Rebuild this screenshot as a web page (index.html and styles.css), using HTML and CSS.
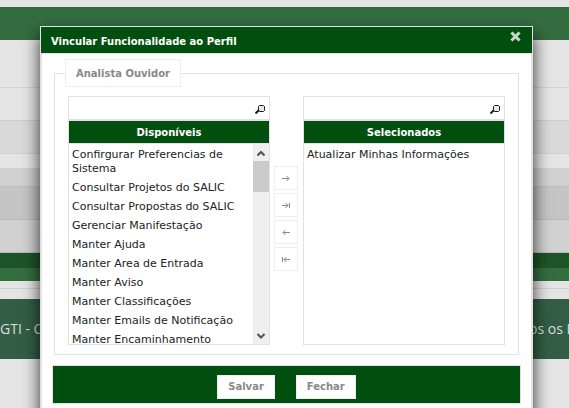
FILE: index.html
```html
<!DOCTYPE html>
<html lang="pt-BR">
<head>
<meta charset="utf-8">
<title>Vincular Funcionalidade ao Perfil</title>
<link rel="stylesheet" href="styles.css">
</head>
<body>
<div class="page">
  <div class="band bar-top"></div>
  <div class="band row-tall"></div>
  <div class="band row"></div>
  <div class="band row-alt"></div>
  <div class="band gap"></div>
  <div class="band row-head"></div>
  <div class="band row-dark"></div>
  <div class="band row-mid"></div>
  <div class="band bar-dark"></div>
  <div class="band bar-low"></div>
  <div class="band rule"></div>
  <footer class="site-footer"><span>GTI - C</span><span>os os D</span></footer>
</div>
<div class="overlay">
  <section class="dialog" role="dialog" aria-labelledby="dialog-title">
    <header class="dialog-head">
      <h1 id="dialog-title">Vincular Funcionalidade ao Perfil</h1>
      <button class="close" type="button" aria-label="Fechar janela">
        <svg width="11" height="11" viewBox="0 0 11 11"><path d="M2.5 2.5l6 6M8.500 2.500l-6 6" stroke="#ccd6cc" stroke-width="3" stroke-linecap="square"/></svg>
      </button>
    </header>
    <form class="dialog-body">
      <fieldset class="profile">
        <legend>Analista Ouvidor</legend>
        <div class="picker">
          <div class="column">
            <label class="search">
              <input type="text" aria-label="Pesquisar disponíveis">
              <svg width="10" height="9" viewBox="0 0 10 9"><path d="M3.500 1.500l1-1h4l1 1v4l-1 1h-4l-1-1z" fill="#e4e9e9" stroke="#1c1c1c"/><path d="M4 5L.5 8.500" stroke="#1c1c1c" stroke-width="2"/></svg>
            </label>
            <h2>Disponíveis</h2>
            <div class="list">
              <ul>
                <li>Confirgurar Preferencias de Sistema</li>
                <li>Consultar Projetos do SALIC</li>
                <li>Consultar Propostas do SALIC</li>
                <li>Gerenciar Manifestação</li>
                <li>Manter Ajuda</li>
                <li>Manter Area de Entrada</li>
                <li>Manter Aviso</li>
                <li>Manter Classificações</li>
                <li>Manter Emails de Notificação</li>
                <li>Manter Encaminhamento</li>
              </ul>
              <div class="scroll">
                <svg width="16" height="17" viewBox="0 0 16 17"><path d="M4.500 11.500L8 8l3.500 3.500" fill="none" stroke="#505050" stroke-width="2"/></svg>
                <div class="thumb"></div>
                <svg class="down" width="16" height="17" viewBox="0 0 16 17"><path d="M4.500 7L8 10.500 11.500 7" fill="none" stroke="#505050" stroke-width="2"/></svg>
              </div>
            </div>
          </div>
          <div class="moves">
            <button type="button" aria-label="Adicionar"><svg width="10" height="7" viewBox="0 0 10 7"><path d="M1 3.500h7M5.500 1L8 3.500 5.500 6"/></svg></button>
            <button type="button" aria-label="Adicionar todos"><svg width="10" height="7" viewBox="0 0 10 7"><path d="M1 3.500h6M4.500 1L7 3.500 4.500 6M8.500 1v5"/></svg></button>
            <button type="button" aria-label="Remover"><svg width="10" height="7" viewBox="0 0 10 7"><path d="M9 3.500H2M4.500 1L2 3.500 4.500 6"/></svg></button>
            <button type="button" aria-label="Remover todos"><svg width="10" height="7" viewBox="0 0 10 7"><path d="M9 3.500H3M5.500 1L3 3.500 5.500 6M1.500 1v5"/></svg></button>
          </div>
          <div class="column">
            <label class="search">
              <input type="text" aria-label="Pesquisar selecionados">
              <svg width="10" height="9" viewBox="0 0 10 9"><path d="M3.500 1.500l1-1h4l1 1v4l-1 1h-4l-1-1z" fill="#e4e9e9" stroke="#1c1c1c"/><path d="M4 5L.5 8.500" stroke="#1c1c1c" stroke-width="2"/></svg>
            </label>
            <h2>Selecionados</h2>
            <div class="list">
              <ul><li>Atualizar Minhas Informações</li></ul>
            </div>
          </div>
        </div>
      </fieldset>
      <div class="actions">
        <button type="submit">Salvar</button>
        <button type="button">Fechar</button>
      </div>
    </form>
  </section>
</div>
</body>
</html>
```
FILE: styles.css
```css
* { box-sizing: border-box; }
body {
  margin: 0;
  background: #e5e5e5;
  color: #222;
  font: 11px/14px "DejaVu Sans", Verdana, sans-serif;
}
.page { padding-top: 7px; min-height: 100vh; overflow: hidden; }
.band { border-bottom: 1px solid #d3d3d3; }
.bar-top { height: 33px; background: #346c40; border: 0; }
.row-tall { height: 48px; }
.row { height: 33px; border-color: #cdcdcd; }
.row-alt { height: 33px; background: #dadada; border-color: #d0d0d0; }
.gap { height: 14px; border: 0; }
.row-head { height: 19px; background: #d1d1d1; border-color: #bdbdbd; }
.row-dark { height: 33px; background: #c5c5c5; border-color: #b9b9b9; }
.row-mid { height: 33px; background: #d1d1d1; border-color: #b9b9b9; }
.bar-dark { height: 15px; background: #1f5429; border: 0; }
.bar-low { height: 13px; background: #346e3f; border: 0; }
.rule { height: 8px; border-color: #cfcfcf; }
.site-footer {
  display: grid;
  grid-template-columns: 1fr 40px;
  align-items: center;
  height: 60px;
  margin-top: 10px;
  color: #d9dfdb;
  background: repeating-linear-gradient(45deg, #2e594055 0 1px, transparent 1px 5px), repeating-linear-gradient(-45deg, #315c43 0 1px, #345f46 1px 5px);
  font: 14px/20px "Open Sans", sans-serif;
  white-space: nowrap;
}
.overlay {
  position: absolute;
  inset: 0;
  overflow: hidden;
  padding: 26px 36px 0 40px;
}
.dialog {
  border: 1px solid #e2e2e2;
  background: #fff;
  box-shadow: 0 8px 16px #000c;
}
.dialog-head {
  display: flex;
  justify-content: space-between;
  align-items: flex-start;
  height: 26px;
  padding: 4px 11px 0 10px;
  background: #004f0f;
  color: #fff;
}
h1, h2 { margin: 0; font-size: 10px; line-height: 14px; font-weight: bold; }
h1 { padding-top: 4px; }
button { font: bold 10px/14px "DejaVu Sans", Verdana, sans-serif; padding: 0; cursor: pointer; }
.close { border: 0; background: none; }
.close svg { display: block; }
.dialog-body { border: 1px solid #e2e2e2; padding: 5px 10px 16px; }
.profile {
  min-width: 0;
  margin: 0 2px 10px;
  padding: 9px 13px 9px;
  border: 1px solid #e2e2e2;
}
legend {
  margin-left: -3px;
  padding: 7px 10px 5px;
  border: 1px solid #eee;
  color: #888;
  font-size: 10px;
  line-height: 14px;
  font-weight: bold;
}
.picker { display: grid; grid-template-columns: 1fr 25px 1fr; column-gap: 4px; }
.column { display: flex; flex-direction: column; min-width: 0; }
.search { display: flex; align-items: center; height: 24px; padding: 2px 4px 0 0; border: 1px solid #e2e2e2; }
.search input { flex: 1; min-width: 0; height: 20px; padding: 0 4px; border: 0; outline: 0; font: inherit; }
h2 {
  padding: 5px 0 3px;
  border: 1px solid #e2e2e2;
  background: #004f0f;
  color: #fff;
  text-align: center;
}
.list { display: flex; height: 201px; border: 1px solid #e2e2e2; border-top: 0; overflow: hidden; }
ul { flex: 1; margin: 0; padding: 4px 3px 0; list-style: none; }
li { margin-bottom: 5px; }
.scroll { display: flex; flex-direction: column; flex: none; width: 16px; background: #efefef; }
.scroll svg { display: block; }
.thumb { height: 31px; background: #cbcbcb; }
.down { margin-top: auto; }
.moves { display: flex; flex-direction: column; gap: 3px; padding-top: 70px; }
.moves button { display: grid; place-items: center; width: 24px; height: 24px; border: 1px solid #eee; background: #fff; }
.moves path { fill: none; stroke: #888; stroke-width: 1; }
.actions {
  display: flex;
  justify-content: center;
  gap: 21px;
  padding: 9px 0 4px;
  border: 1px solid #e2e2e2;
  background: #004f0f;
}
.actions button { padding: 5px 10px; height: 24px; border: 1px solid #eee; background: #fff; color: #888; line-height: 12px; }
```
